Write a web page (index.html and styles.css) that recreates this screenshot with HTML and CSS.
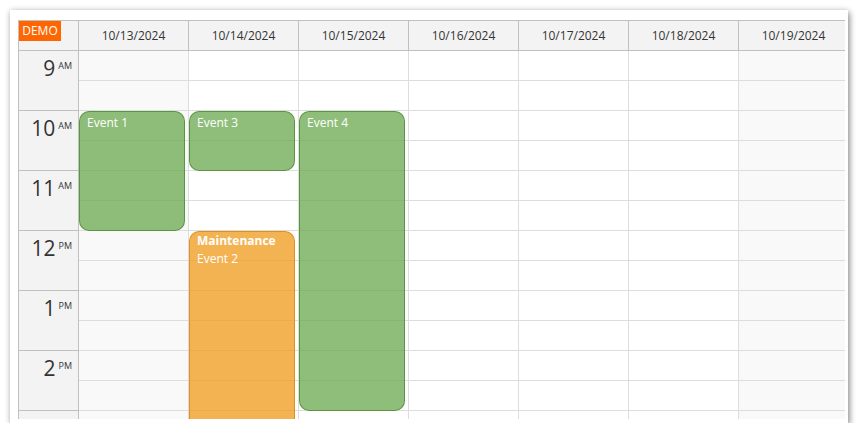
FILE: index.html
```html
<!DOCTYPE html>
<html>
<head>
<meta charset="utf-8">
<link rel="stylesheet" href="styles.css">
</head>
<body>
<div class="frame">
  <div class="cal">
    <div class="header">
      <div class="corner"><span class="demo">DEMO</span></div>
      <div class="colhead">10/13/2024</div>
      <div class="colhead">10/14/2024</div>
      <div class="colhead">10/15/2024</div>
      <div class="colhead">10/16/2024</div>
      <div class="colhead">10/17/2024</div>
      <div class="colhead">10/18/2024</div>
      <div class="colhead">10/19/2024</div>
    </div>
    <div class="body">
      <div class="rowheaders">
        <div class="hour"><span class="num">9</span><span class="ampm">AM</span></div>
        <div class="hour"><span class="num">10</span><span class="ampm">AM</span></div>
        <div class="hour"><span class="num">11</span><span class="ampm">AM</span></div>
        <div class="hour"><span class="num">12</span><span class="ampm">PM</span></div>
        <div class="hour"><span class="num">1</span><span class="ampm">PM</span></div>
        <div class="hour"><span class="num">2</span><span class="ampm">PM</span></div>
        <div class="hour"></div>
      </div>
      <div class="day weekend">
        <div class="cell"></div><div class="cell"></div><div class="cell"></div><div class="cell"></div>
        <div class="cell"></div><div class="cell"></div><div class="cell"></div><div class="cell"></div>
        <div class="cell"></div><div class="cell"></div><div class="cell"></div><div class="cell"></div>
        <div class="cell"></div><div class="cell"></div>
        <div class="event green ev1"><div class="ev-text">Event 1</div></div>
      </div>
      <div class="day">
        <div class="cell"></div><div class="cell"></div><div class="cell"></div><div class="cell"></div>
        <div class="cell"></div><div class="cell"></div><div class="cell"></div><div class="cell"></div>
        <div class="cell"></div><div class="cell"></div><div class="cell"></div><div class="cell"></div>
        <div class="cell"></div><div class="cell"></div>
        <div class="event green ev3"><div class="ev-text">Event 3</div></div>
        <div class="event orange ev2"><div class="ev-title">Maintenance</div><div class="ev-text">Event 2</div></div>
      </div>
      <div class="day">
        <div class="cell"></div><div class="cell"></div><div class="cell"></div><div class="cell"></div>
        <div class="cell"></div><div class="cell"></div><div class="cell"></div><div class="cell"></div>
        <div class="cell"></div><div class="cell"></div><div class="cell"></div><div class="cell"></div>
        <div class="cell"></div><div class="cell"></div>
        <div class="event green ev4"><div class="ev-text">Event 4</div></div>
      </div>
      <div class="day">
        <div class="cell"></div><div class="cell"></div><div class="cell"></div><div class="cell"></div>
        <div class="cell"></div><div class="cell"></div><div class="cell"></div><div class="cell"></div>
        <div class="cell"></div><div class="cell"></div><div class="cell"></div><div class="cell"></div>
        <div class="cell"></div><div class="cell"></div>
      </div>
      <div class="day">
        <div class="cell"></div><div class="cell"></div><div class="cell"></div><div class="cell"></div>
        <div class="cell"></div><div class="cell"></div><div class="cell"></div><div class="cell"></div>
        <div class="cell"></div><div class="cell"></div><div class="cell"></div><div class="cell"></div>
        <div class="cell"></div><div class="cell"></div>
      </div>
      <div class="day">
        <div class="cell"></div><div class="cell"></div><div class="cell"></div><div class="cell"></div>
        <div class="cell"></div><div class="cell"></div><div class="cell"></div><div class="cell"></div>
        <div class="cell"></div><div class="cell"></div><div class="cell"></div><div class="cell"></div>
        <div class="cell"></div><div class="cell"></div>
      </div>
      <div class="day weekend">
        <div class="cell"></div><div class="cell"></div><div class="cell"></div><div class="cell"></div>
        <div class="cell"></div><div class="cell"></div><div class="cell"></div><div class="cell"></div>
        <div class="cell"></div><div class="cell"></div><div class="cell"></div><div class="cell"></div>
        <div class="cell"></div><div class="cell"></div>
      </div>
    </div>
  </div>
</div>
</body>
</html>
```

FILE: styles.css
```css
* { box-sizing: border-box; }
html, body {
  margin: 0;
  padding: 0;
  background: #ffffff;
}
body {
  font-family: "Open Sans", "Noto Sans", "Liberation Sans", sans-serif;
  font-size: 12px;
  color: #333;
}
.frame {
  margin: 10px 0 0 10px;
  width: 838px;
  height: 413px;
  background: #fff;
  padding: 10px 3px 4px 8px;
  box-shadow: 2px 3px 6px rgba(0, 0, 0, 0.35), 0 0 6px rgba(0, 0, 0, 0.18);
}
.cal {
  width: 827px;
  height: 399px;
  overflow: hidden;
  border-left: 1px solid #c0c0c0;
  border-top: 1px solid #c0c0c0;
}
.header {
  display: flex;
  height: 30px;
  width: 830px;
}
.corner {
  flex: none;
  width: 60px;
  height: 30px;
  background: #f3f3f3;
  border-right: 1px solid #c0c0c0;
  border-bottom: 1px solid #c0c0c0;
}
.demo {
  display: inline-block;
  vertical-align: top;
  background: #ff6600;
  color: #fff;
  font-size: 12px;
  line-height: 20px;
  height: 20px;
  width: 42px;
  text-align: center;
}
.colhead {
  flex: none;
  width: 110px;
  height: 30px;
  background: #f3f3f3;
  border-right: 1px solid #c0c0c0;
  border-bottom: 1px solid #c0c0c0;
  text-align: center;
  line-height: 29px;
  font-size: 12px;
  color: #333;
}
.body {
  display: flex;
  width: 830px;
}
.rowheaders {
  flex: none;
  width: 60px;
}
.hour {
  height: 60px;
  background: #f3f3f3;
  border-right: 1px solid #c0c0c0;
  border-bottom: 1px solid #c0c0c0;
  display: flex;
  justify-content: flex-end;
  align-items: flex-start;
  padding: 3px 6px 0 0;
  color: #333;
}
.num {
  font-size: 21px;
  line-height: 28px;
}
.ampm {
  font-size: 9px;
  line-height: 12px;
  margin-top: 6px;
  margin-left: 3px;
}
.day {
  flex: none;
  width: 110px;
  position: relative;
  border-right: 1px solid #dddddd;
  background: #fff;
}
.day.weekend {
  background: #f9f9f9;
}
.cell {
  height: 30px;
  border-bottom: 1px solid #dddddd;
}
.event {
  position: absolute;
  left: 0;
  width: 106px;
  border-radius: 10px;
  color: #fff;
  padding: 3px 7px;
  font-size: 12px;
  line-height: 16px;
  overflow: hidden;
}
.green {
  background: rgba(106, 168, 79, 0.75);
  border: 1px solid rgba(86, 145, 60, 0.9);
}
.orange {
  background: rgba(241, 160, 40, 0.8);
  border: 1px solid rgba(220, 140, 30, 0.9);
}
.ev1 { top: 60px; height: 120px; }
.ev3 { top: 60px; height: 60px; }
.ev4 { top: 60px; height: 300px; }
.ev2 { top: 180px; height: 240px; padding-top: 1px; }
.ev-title {
  font-weight: bold;
  margin-bottom: 2px;
}
```
